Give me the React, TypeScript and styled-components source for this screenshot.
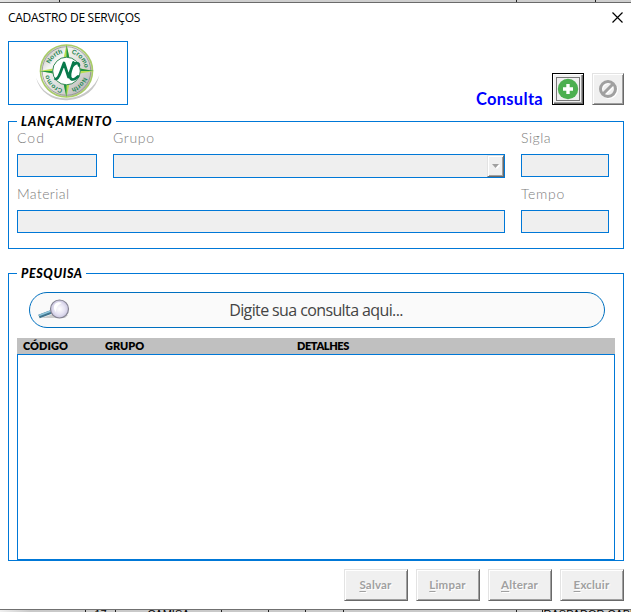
import React from "react";
import styled, { createGlobalStyle } from "styled-components";

const BLUE = "#0078d7";

const Global = createGlobalStyle`
  * { box-sizing: border-box; }
  html, body { margin: 0; padding: 0; background: #fff; overflow: hidden; }
  button, input { font: inherit; margin: 0; padding: 0; border-radius: 0; }
`;

const Page = styled.div`
  width: 631px;
  height: 612px;
  display: flex;
  flex-direction: column;
  overflow: hidden;
  background: #fff;
  color: #000;
  font-family: Lato, sans-serif;
`;

const SheetTop = styled.div`
  height: 3px;
  flex: none;
  display: flex;
  overflow: hidden;
  background: linear-gradient(90deg, #e4e4e4, #cfcfcf 60px);
  border-bottom: 1px solid #6a6a6a;
`;

const SheetBottom = styled.div`
  height: 3px;
  flex: none;
  display: flex;
  overflow: hidden;
  background: linear-gradient(90deg, #f0f0f0, #c9c9c9 30px);
  border-top: 1px solid #707070;
  font: 11px/9px "Liberation Sans", sans-serif;
`;

const SheetCell = styled.div<{ $w: number }>`
  width: ${(p) => p.$w}px;
  flex: none;
  height: 11px;
  border-right: 1px solid #222;
  text-align: center;
  white-space: nowrap;
`;

const Dialog = styled.main`
  flex: 1;
  min-height: 0;
  display: flex;
  flex-direction: column;
  padding: 0 7px 8px 8px;
`;

const TitleBar = styled.header`
  height: 38px;
  flex: none;
  display: flex;
  justify-content: space-between;
`;

const Title = styled.h1`
  margin: 6px 0 0;
  font: 400 12px/17px "Open Sans", sans-serif;
  letter-spacing: -0.28px;
  white-space: nowrap;
`;

const Close = styled.button`
  width: 11px;
  height: 11px;
  margin: 9px 1px 0 0;
  border: 0;
  background: none;
  svg { display: block; }
`;

const Banner = styled.div`
  height: 64px;
  flex: none;
  display: flex;
  align-items: flex-end;
`;

const LogoBox = styled.div`
  width: 120px;
  height: 64px;
  border: 1px solid ${BLUE};
  svg { display: block; }
`;

const Mode = styled.span`
  margin-left: auto;
  margin-right: 9px;
  font: 700 16.5px/20px Lato, sans-serif;
  letter-spacing: 0.3px;
  height: 16px;
  color: #00f;
`;

const IconButton = styled.button<{ $focus?: boolean }>`
  width: 32px;
  height: 32px;
  margin-right: ${(p) => (p.$focus ? 8 : 0)}px;
  display: grid;
  place-items: center;
  background: #f0f0f0;
  border: 1px solid;
  border-color: ${(p) => (p.$focus ? "#000" : "#e3e3e3 #696969 #696969 #e3e3e3")};
  box-shadow: ${(p) =>
    p.$focus
      ? "inset 1px 1px #fff, inset -1px -1px #696969, inset -2px -2px #a0a0a0"
      : "inset 1px 1px #fff, inset -1px -1px #a0a0a0"};
  svg { display: block; }
`;

const Group = styled.section<{ $top: number; $h: number }>`
  height: ${(p) => p.$h}px;
  margin-top: ${(p) => p.$top}px;
  flex: none;
  border: 1px solid ${BLUE};
  padding: 0 8px;
`;

const Legend = styled.h2<{ $w: number; $space: number }>`
  width: ${(p) => p.$w}px;
  height: 14px;
  margin: -8px 0 0;
  padding-left: 4px;
  background: #fff;
  font: italic 900 12.5px/15px Lato, sans-serif;
  letter-spacing: ${(p) => p.$space}px;
  white-space: nowrap;
`;

const Fields = styled.div`
  display: grid;
  grid-template-columns: 80px 392px 88px;
  grid-template-rows: 56px 56px;
  column-gap: 16px;
`;

const Field = styled.label<{ $wide?: boolean }>`
  grid-column: ${(p) => (p.$wide ? "span 2" : "auto")};
  display: flex;
  flex-direction: column;
`;

const Caption = styled.span<{ $space: number }>`
  height: 26px;
  padding-top: 2px;
  font: 300 14px/16px Lato, sans-serif;
  letter-spacing: ${(p) => p.$space}px;
  color: #7c7c7c;
`;

const Input = styled.input`
  width: 100%;
  height: 23px;
  background: #efefef;
  border: 1px solid ${BLUE};
`;

const Select = styled.div`
  height: 24px;
  display: flex;
  justify-content: flex-end;
  background: #efefef;
  border: 1px solid ${BLUE};
`;

const Arrow = styled.span`
  width: 17px;
  height: 22px;
  display: grid;
  place-items: center;
  background: #f0f0f0;
  border: 1px solid;
  border-color: #e3e3e3 #696969 #696969 #e3e3e3;
  box-shadow: inset 1px 1px #fff, inset -1px -1px #a0a0a0;
`;

const Search = styled.div`
  height: 36px;
  margin: 12px 10px 10px 12px;
  display: flex;
  align-items: center;
  background: #fafafa;
  border: 1px solid #0070c0;
  border-radius: 18px;
  svg { flex: none; margin-left: 5px; }
`;

const Hint = styled.span`
  flex: 1;
  margin-right: 43px;
  text-align: center;
  font: 400 16px/24px "Open Sans", sans-serif;
  letter-spacing: -0.61px;
  color: #444;
  white-space: nowrap;
`;

const TableHead = styled.div`
  height: 16px;
  display: grid;
  grid-template-columns: 82px 192px 1fr;
  padding-left: 6px;
  background: #c0c0c0;
  font: 800 11px/16px Lato, sans-serif;
`;

const HeadCell = styled.span<{ $space: number }>`
  letter-spacing: ${(p) => p.$space}px;
`;

const TableBody = styled.div`
  height: 206px;
  border: 1px solid ${BLUE};
`;

const Actions = styled.footer`
  display: flex;
  justify-content: flex-end;
  gap: 8px;
  margin-top: 8px;
`;

const ActionButton = styled.button`
  width: 64px;
  height: 32px;
  background: #f0f0f0;
  border: 1px solid;
  border-color: #e3e3e3 #696969 #696969 #e3e3e3;
  box-shadow: inset 1px 1px #fff, inset -1px -1px #a0a0a0;
  padding-right: 1px;
  color: #a0a0a0;
  text-shadow: 1px 1px #fff;
  font: 700 11.5px/16px Lato, sans-serif;
  letter-spacing: 0.2px;
  u { text-underline-offset: 2px; text-decoration-thickness: 1px; text-decoration-skip-ink: none; }
`;

const Logo = () => (
  <svg width="118" height="62" viewBox="9 41.5 118 62">
    <defs>
      <linearGradient id="metal" x1="0" y1="0" x2="1" y2="1">
        <stop offset="0" stopColor="#aaa" />
        <stop offset="0.3" stopColor="#f5f5f3" />
        <stop offset="0.65" stopColor="#d5d5d2" />
        <stop offset="1" stopColor="#aaa" />
      </linearGradient>
      <path id="arcTop" d="M48.5 70.5a18.2 18.2 0 0 1 36.4 0" />
      <path id="arcBottom" d="M84.5 70.5a18.2 18.2 0 0 1-36.4 0" />
    </defs>
    <path d="M36 77C40 93 54 101 69 99.500c15-1 27-10 30.500-25-5 12-15 21-29 23-15 2-29-5-34.500-20.500z" fill="#c8c8c8" />
    <circle cx="66.5" cy="70.5" r="26" fill="url(#metal)" stroke="#a9cc68" strokeWidth="1.6" />
    <circle cx="66.5" cy="70.5" r="24.3" fill="none" stroke="#777" strokeWidth="0.6" />
    <path d="M66.5 44l3 14-3 5-3-5zM66.5 97l3-14-3-5-3 5zM39.5 70.5l14-2.5 4 2.5-4 2.5zM94 70.5l-14-2.5-4 2.5 4 2.5z" fill="#b8de52" />
    <path d="M66.5 44l3 14-3 5zM66.5 97l-3-14 3-5zM39.5 70.5l14 2.5 4-2.5zM94 70.5l-14-2.5-4 2.5z" fill="#219344" />
    <circle cx="66.5" cy="70.5" r="13.8" fill="#fff" stroke="#348956" strokeWidth="1" />
    <g fill="#238653" fontFamily="Liberation Sans, sans-serif" fontSize="6.5" fontWeight="700">
      <text><textPath href="#arcTop" startOffset="7">North</textPath></text>
      <text><textPath href="#arcTop" startOffset="33">Cromo</textPath></text>
      <text><textPath href="#arcBottom" startOffset="6">North</textPath></text>
      <text><textPath href="#arcBottom" startOffset="32">Cromo</textPath></text>
    </g>
    <path d="M55.500 78.500c3 0 4-4 5.500-8l3-8 4.500 14 5-14.500M79 65c0-4-6-3-8 4s-1 10 2 10 3-2 5-3" fill="none" stroke="#08794b" strokeWidth="2.700" strokeLinecap="round" strokeLinejoin="round" />
  </svg>
);

const Magnifier = () => (
  <svg width="36" height="24" viewBox="36 298 36 24">
    <defs>
      <radialGradient id="lens">
        <stop offset="0" stopColor="#fff" />
        <stop offset="0.6" stopColor="#e6e3f3" />
        <stop offset="1" stopColor="#c9c5df" />
      </radialGradient>
    </defs>
    <path d="M42 318h24l3-3-14-1z" fill="#ccc" />
    <path d="M40 316.500L52 312" stroke="#41758e" strokeWidth="4" />
    <path d="M40 315.500L52 311" stroke="#8fc6dc" strokeWidth="1.500" />
    <circle cx="60.500" cy="309" r="9" fill="url(#lens)" stroke="#858493" strokeWidth="1.200" />
    <path d="M56 304c2-2 5-2 7-1-3 1-6 4-6 9-2-2-3-5-1-8z" fill="#fff" />
  </svg>
);

const actions = ["Salvar", "Limpar", "Alterar", "Excluir"];

export default function App() {
  return (
    <>
      <Global />
      <Page>
        <SheetTop>
          <SheetCell $w={60} /><SheetCell $w={457} /><SheetCell $w={79} />
        </SheetTop>
        <Dialog>
          <TitleBar>
            <Title>CADASTRO DE SERVIÇOS</Title>
            <Close aria-label="Fechar">
              <svg width="11" height="11" viewBox="0 0 11 11"><path d="M.5.5l10 10M10.500.5l-10 10" stroke="#000" strokeWidth="1.200" /></svg>
            </Close>
          </TitleBar>
          <Banner>
            <LogoBox><Logo /></LogoBox>
            <Mode>Consulta</Mode>
            <IconButton $focus aria-label="Adicionar">
              <svg width="26" height="26" viewBox="0 0 26 26">
                <rect x="1.500" y="1.500" width="23" height="23" fill="none" stroke="#000" strokeDasharray="1 1" />
                <circle cx="13" cy="13" r="10.200" fill="#4caf50" />
                <path d="M13 8v10M8 13h10" stroke="#fff" strokeWidth="3.400" />
              </svg>
            </IconButton>
            <IconButton disabled aria-label="Cancelar">
              <svg width="20" height="20" viewBox="0 0 20 20" fill="none" strokeWidth="3">
                <g stroke="#fff" transform="translate(1 1)"><circle cx="10" cy="10" r="7.500" /><path d="M5 15L15 5" /></g>
                <g stroke="#a0a0a0"><circle cx="10" cy="10" r="7.500" /><path d="M5 15L15 5" /></g>
              </svg>
            </IconButton>
          </Banner>
          <Group $top={16} $h={128}>
            <Legend $w={99} $space={0.9}>LANÇAMENTO</Legend>
            <Fields>
              <Field><Caption $space={1}>Cod</Caption><Input disabled /></Field>
              <Field>
                <Caption $space={0.65}>Grupo</Caption>
                <Select><Arrow><svg width="8" height="5" viewBox="0 0 8 5"><path d="M1 1h8L5 5z" fill="#fff" /><path d="M0 0h7L3.500 4z" fill="#a0a0a0" /></svg></Arrow></Select>
              </Field>
              <Field><Caption $space={0.5}>Sigla</Caption><Input disabled /></Field>
              <Field $wide><Caption $space={0.4}>Material</Caption><Input disabled /></Field>
              <Field><Caption $space={0.7}>Tempo</Caption><Input disabled /></Field>
            </Fields>
          </Group>
          <Group $top={24} $h={288}>
            <Legend $w={69} $space={0.6}>PESQUISA</Legend>
            <Search><Magnifier /><Hint>Digite sua consulta aqui...</Hint></Search>
            <TableHead>
              <HeadCell $space={0.05}>CÓDIGO</HeadCell>
              <HeadCell $space={-0.05}>GRUPO</HeadCell>
              <HeadCell $space={-0.4}>DETALHES</HeadCell>
            </TableHead>
            <TableBody />
          </Group>
          <Actions>
            {actions.map((label) => (
              <ActionButton key={label} disabled><u>{label[0]}</u>{label.slice(1)}</ActionButton>
            ))}
          </Actions>
        </Dialog>
        <SheetBottom>
          <SheetCell $w={86} /><SheetCell $w={30}>17</SheetCell><SheetCell $w={106}>CAMISA</SheetCell>
          <SheetCell $w={47} /><SheetCell $w={37} /><SheetCell $w={38} /><SheetCell $w={173} /><SheetCell $w={26} /><SheetCell $w={96}>RASPADOR CABE</SheetCell>
        </SheetBottom>
      </Page>
    </>
  );
}
